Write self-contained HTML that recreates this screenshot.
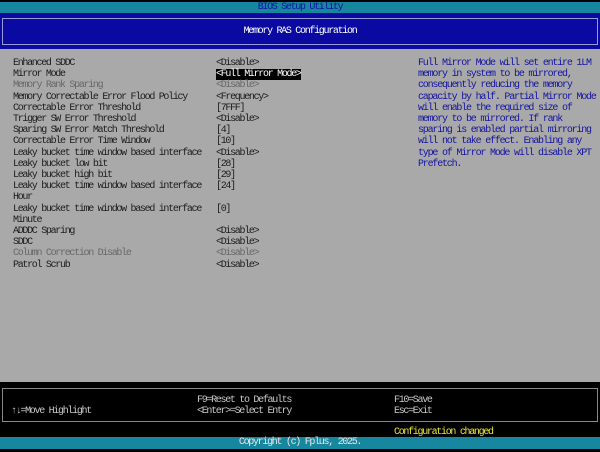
<!DOCTYPE html>
<html><head><meta charset="utf-8"><style>
*{margin:0;padding:0;box-sizing:border-box}
body{width:600px;height:452px;background:#000;position:relative;overflow:hidden;font-family:"Liberation Mono",monospace;font-size:10px;letter-spacing:-1.3px;}
.a{position:absolute;white-space:pre;line-height:11.2px}
#top{position:absolute;left:0;top:2px;width:600px;height:11px;background:#17879f;color:#1212a8;text-align:center;line-height:11px}
#hdr{position:absolute;left:0;top:13px;width:600px;height:36px;background:#0a0aa2}
#hbox{position:absolute;left:2px;top:5px;width:596px;height:27px;border:1px solid #9a9ad8;color:#fff;text-align:center;line-height:25px}
#main{position:absolute;left:0;top:49px;width:600px;height:333px;background:#a9a9a9;color:#1c1c1c}
.d{color:#686868}
.h{color:#1414a0}
#sel{background:#000;color:#fff}
#fbox{position:absolute;left:2px;top:388px;width:596px;height:34px;border:1px solid #888;color:#c8c8c8}
#copy{position:absolute;left:0;top:437px;width:600px;height:12px;background:#17879f;color:#e8e8e8;text-align:center;line-height:12px}
</style></head><body>
<div id="top">BIOS Setup Utility</div>
<div id="hdr"><div id="hbox">Memory RAS Configuration</div></div>
<div id="main">
<div class="a" style="left:13px;top:9px">Enhanced SDDC
Mirror Mode
<span class="d">Memory Rank Sparing</span>
Memory Correctable Error Flood Policy
Correctable Error Threshold
Trigger SW Error Threshold
Sparing SW Error Match Threshold
Correctable Error Time Window
Leaky bucket time window based interface
Leaky bucket low bit
Leaky bucket high bit
Leaky bucket time window based interface
Hour
Leaky bucket time window based interface
Minute
ADDDC Sparing
SDDC
<span class="d">Column Correction Disable</span>
Patrol Scrub</div>
<div class="a" style="left:216px;top:9px">&lt;Disable&gt;
<span id="sel">&lt;Full Mirror Mode&gt;</span>
<span class="d">&lt;Disable&gt;</span>
&lt;Frequency&gt;
[7FFF]
&lt;Disable&gt;
[4]
[10]
&lt;Disable&gt;
[28]
[29]
[24]

[0]

&lt;Disable&gt;
&lt;Disable&gt;
<span class="d">&lt;Disable&gt;</span>
&lt;Disable&gt;</div>
<div class="a h" style="left:418px;top:9px;letter-spacing:-1.2px">Full Mirror Mode will set entire 1LM
memory in system to be mirrored,
consequently reducing the memory
capacity by half. Partial Mirror Mode
will enable the required size of
memory to be mirrored. If rank
sparing is enabled partial mirroring
will not take effect. Enabling any
type of Mirror Mode will disable XPT
Prefetch.</div>
</div>
<div id="fbox">
<div class="a" style="left:8px;top:17px">↑↓=Move Highlight</div>
<div class="a" style="left:194px;top:6px">F9=Reset to Defaults
&lt;Enter&gt;=Select Entry</div>
<div class="a" style="left:391px;top:6px">F10=Save
Esc=Exit</div>
</div>
<div class="a" style="left:394px;top:427px;color:#e8e838">Configuration changed</div>
<div id="copy">Copyright (c) Fplus, 2025.</div>
</body></html>
